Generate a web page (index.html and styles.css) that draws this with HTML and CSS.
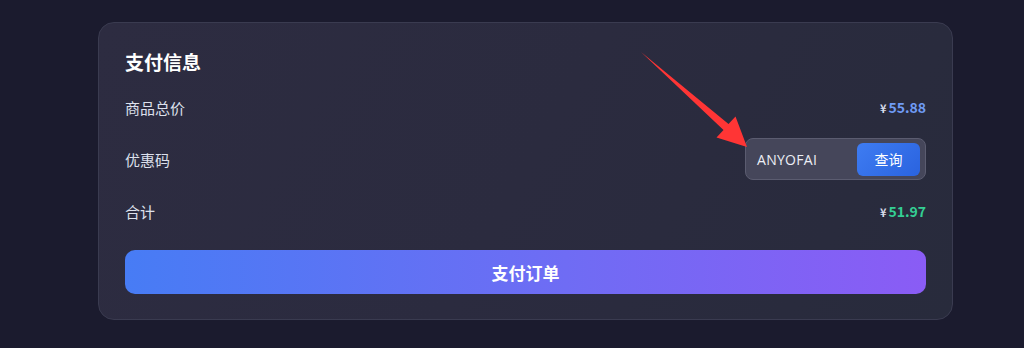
FILE: index.html
```html
<!DOCTYPE html>
<html>
  <head>
    <meta charset="UTF-8" />
    <title>支付信息</title>
    <link rel="stylesheet" href="styles.css">
  </head>
  <body>
    <div class="page">
      <div class="card">
        <h2 class="title">支付信息</h2>
        <div class="row">
          <span class="label">商品总价</span>
          <span class="price blue"><small>¥</small>55.88</span>
        </div>
        <div class="row">
          <span class="label">优惠码</span>
          <div class="coupon">
            <span class="code">ANYOFAI</span>
            <button class="query">查询</button>
          </div>
        </div>
        <div class="row">
          <span class="label">合计</span>
          <span class="price green"><small>¥</small>51.97</span>
        </div>
        <button class="pay">支付订单</button>
      </div>
      <svg class="arrow" width="1024" height="348" viewBox="0 0 1024 348">
        <polygon points="641,52 728.5,124 735.5,116.5 747,147 716.5,137.5 723.5,130" fill="#ff3535"/>
      </svg>
    </div>
  </body>
</html>
```

FILE: styles.css
```css
html, body {
  margin: 0;
  height: 100%;
}
body {
  background: #1b1b2e;
  font-family: "Noto Sans CJK SC", "Noto Sans", sans-serif;
  color: #dcdfea;
}
.page {
  position: relative;
  padding: 22px 0 0 98px;
  height: 326px;
}
.card {
  width: 855px;
  box-sizing: border-box;
  padding: 26px 26px 25px 26px;
  border-radius: 16px;
  border: 1px solid #3a3b50;
  background: linear-gradient(120deg, #2d2c41 0%, #2b2b3f 50%, #282b3c 100%);
  display: flex;
  flex-direction: column;
  gap: 10px;
}
.title {
  margin: 0 0 1px 0;
  font-size: 19px;
  line-height: 26px;
  font-weight: bold;
  color: #ffffff;
}
.row {
  height: 42px;
  display: flex;
  align-items: center;
  justify-content: space-between;
}
.label {
  font-size: 15px;
  color: #dde0ec;
}
.price {
  font-size: 14px;
  font-weight: bold;
}
.price small {
  font-size: 11px;
  margin-right: 2px;
  color: #d8dcea;
}
.blue {
  color: #6f9bf5;
}
.green {
  color: #34cf94;
}
.coupon {
  width: 181px;
  height: 42px;
  box-sizing: border-box;
  border: 1px solid #5b5c70;
  border-radius: 8px;
  background: #45465a;
  display: flex;
  align-items: center;
  justify-content: space-between;
  padding: 0 5px 0 11px;
}
.code {
  font-family: "Open Sans", "Noto Sans", sans-serif;
  font-size: 14px;
  letter-spacing: 0.3px;
  color: #eceef5;
}
.query {
  width: 63px;
  height: 33px;
  border: none;
  border-radius: 6px;
  background: linear-gradient(135deg, #3e7cf2, #2a63df);
  color: #ffffff;
  font-family: "Noto Sans CJK SC", sans-serif;
  font-size: 14px;
  padding: 0;
}
.pay {
  margin-top: 8px;
  height: 44px;
  border: none;
  border-radius: 10px;
  background: linear-gradient(90deg, #477cf5 0%, #6f6cf4 55%, #8a5cf5 100%);
  color: #ffffff;
  font-family: "Noto Sans CJK SC", sans-serif;
  font-size: 17px;
  font-weight: bold;
  padding: 0;
}
.arrow {
  position: absolute;
  left: 0;
  top: 0;
  pointer-events: none;
}
```
